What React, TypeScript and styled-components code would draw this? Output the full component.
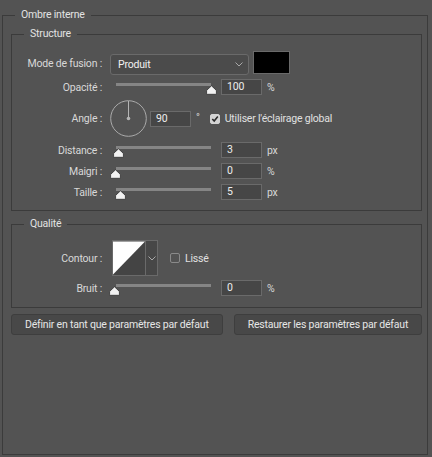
import React from "react";
import styled, { createGlobalStyle } from "styled-components";

const Global = createGlobalStyle`
  html, body { margin: 0; padding: 0; background: #535353; }
  body { font-family: Roboto, "Noto Sans", sans-serif; font-size: 10.5px; letter-spacing: -0.2px; color: #dcdcdc; }
  #root { width: 432px; height: 457px; overflow: hidden; }
  * { box-sizing: border-box; }
`;

const Page = styled.div`
  width: 432px;
  height: 457px;
  padding: 8px 0 0 2px;
  background: #535353;
`;

const Group = styled.fieldset<{ $pl: number; $pr: number; $pt: number; $pb: number; $mt: number; $w: number }>`
  margin: ${(p) => p.$mt}px 0 0 0;
  width: ${(p) => p.$w}px;
  padding: ${(p) => p.$pt}px ${(p) => p.$pr}px ${(p) => p.$pb}px ${(p) => p.$pl}px;
  border: 1px solid #3b3b3b;
  min-width: 0;
`;

const OuterGroup = styled(Group)`
  height: 447px;
`;

const Legend = styled.legend<{ $ml: number }>`
  margin-left: ${(p) => p.$ml}px;
  padding: 0 6px;
  line-height: 14px;
  height: 14px;
  color: #e2e2e2;
`;

const Row = styled.div<{ $mt?: number; $h: number }>`
  display: grid;
  grid-template-columns: 79px 1fr;
  column-gap: 7px;
  margin-top: ${(p) => p.$mt ?? 0}px;
  height: ${(p) => p.$h}px;
  align-items: center;
`;

const Label = styled.div`
  text-align: right;
  line-height: 14px;
  padding-top: 1px;
  padding-right: 1px;
  white-space: nowrap;
  color: #d8d8d8;
`;

const Controls = styled.div<{ $align?: string }>`
  display: flex;
  align-items: ${(p) => p.$align ?? "center"};
  height: 100%;
`;

const Select = styled.div`
  width: 139px;
  height: 21px;
  margin-top: 3px;
  border: 1px solid #6a6a6a;
  border-radius: 3px;
  background: #4b4b4b;
  display: flex;
  align-items: center;
  justify-content: space-between;
  padding: 0 5px 0 7px;
  color: #f0f0f0;
`;

const Swatch = styled.div`
  width: 37px;
  height: 23px;
  margin-left: 4px;
  background: #000;
  border: 1px solid #6a6a6a;
`;

const SliderBox = styled.div`
  position: relative;
  width: 105px;
  height: 16px;
  align-self: flex-start;
`;

const Track = styled.div`
  margin: 4px 4px 0 6px;
  height: 3px;
  background: #858585;
`;

const Thumb = styled.svg`
  position: absolute;
  top: 6px;
  width: 11px;
  height: 10px;
`;

const NumInput = styled.div<{ $ml?: number }>`
  width: 41px;
  height: 16px;
  margin-left: ${(p) => p.$ml ?? 6}px;
  border: 1px solid #6a6a6a;
  background: #464646;
  color: #eeeeee;
  padding-left: 5px;
  line-height: 14px;
`;

const Unit = styled.span`
  margin-left: 5px;
  color: #d8d8d8;
`;

const Degree = styled.span`
  margin-left: 5px;
  margin-top: -2px;
  color: #d8d8d8;
`;

const Check = styled.div<{ $on?: boolean; $ml: number }>`
  width: 10px;
  height: 10px;
  margin-left: ${(p) => p.$ml}px;
  border-radius: 2px;
  background: ${(p) => (p.$on ? "#d4d4d4" : "transparent")};
  border: 1px solid ${(p) => (p.$on ? "#d4d4d4" : "#8a8a8a")};
  display: flex;
  align-items: center;
  justify-content: center;
`;

const CheckText = styled.span`
  margin-left: 5px;
  color: #e0e0e0;
`;

const ContourBox = styled.div`
  margin-left: 2px;
  width: 46px;
  height: 36px;
  border: 1px solid #6a6a6a;
  display: flex;
  background: #444;
`;

const ContourPreview = styled.svg`
  width: 33px;
  height: 34px;
  display: block;
  border-right: 1px solid #6a6a6a;
`;

const ContourArrow = styled.div`
  flex: 1;
  display: flex;
  align-items: center;
  justify-content: center;
  background: #474747;
`;

const Buttons = styled.div`
  display: flex;
  gap: 11px;
  margin-top: 6px;
`;

const Button = styled.div`
  height: 21px;
  padding: 0 13px;
  border: 1px solid #3e3e3e;
  border-radius: 3px;
  background: #484848;
  color: #e6e6e6;
  display: flex;
  align-items: center;
  white-space: nowrap;
`;

const Chevron = () => (
  <svg width="8" height="5" viewBox="0 0 8 5">
    <polyline points="0.5,0.5 4,4 7.5,0.5" fill="none" stroke="#a8a8a8" strokeWidth="1" />
  </svg>
);

const Slider = ({ frac }: { frac: number }) => (
  <SliderBox>
    <Track />
    <Thumb viewBox="0 0 11 10" style={{ left: `${Math.round(6 + frac * 95 - 5.5)}px` }}>
      <path
        d="M5.5 0.8 L10.2 5.2 Q10.4 5.5 10.4 6 V8.6 Q10.4 9.3 9.7 9.3 H1.3 Q0.6 9.3 0.6 8.6 V6 Q0.6 5.5 0.8 5.2 Z"
        fill="#f2f2f2"
        stroke="#2e2e2e"
        strokeWidth="0.8"
      />
    </Thumb>
  </SliderBox>
);

const Dial = () => (
  <svg width="37" height="37" viewBox="0 0 37 37">
    <circle cx="18.5" cy="18.5" r="17.8" fill="none" stroke="#aaaaaa" strokeWidth="1" />
    <line x1="18.5" y1="1" x2="18.5" y2="18.5" stroke="#b4b4b4" strokeWidth="1" />
    <circle cx="18.5" cy="18.5" r="1.8" fill="#b4b4b4" />
  </svg>
);

const CheckMark = () => (
  <svg width="8" height="8" viewBox="0 0 8 8">
    <polyline points="1.3,4 3.2,6 6.8,1.6" fill="none" stroke="#2a2a2a" strokeWidth="1.6" />
  </svg>
);

export default function App() {
  return (
    <>
      <Global />
      <Page>
        <OuterGroup $w={426} $pl={8} $pr={5} $pt={0} $pb={0} $mt={0}>
          <Legend $ml={4}>Ombre interne</Legend>

          <Group $w={411} $pl={12} $pr={12} $pt={10} $pb={10} $mt={5}>
            <Legend $ml={0}>Structure</Legend>

            <Row $h={24}>
              <Label>Mode de fusion :</Label>
              <Controls $align="flex-start">
                <Select>
                  <span>Produit</span>
                  <Chevron />
                </Select>
                <Swatch />
              </Controls>
            </Row>

            <Row $mt={4} $h={16}>
              <Label>Opacité :</Label>
              <Controls>
                <Slider frac={1} />
                <NumInput>100</NumInput>
                <Unit>%</Unit>
              </Controls>
            </Row>

            <Row $mt={5} $h={37}>
              <Label>Angle :</Label>
              <Controls>
                <Dial />
                <NumInput $ml={3}>90</NumInput>
                <Degree>°</Degree>
                <Check $on $ml={10}>
                  <CheckMark />
                </Check>
                <CheckText>Utiliser l'éclairage global</CheckText>
              </Controls>
            </Row>

            <Row $mt={5} $h={16}>
              <Label>Distance :</Label>
              <Controls>
                <Slider frac={2 / 95} />
                <NumInput>3</NumInput>
                <Unit>px</Unit>
              </Controls>
            </Row>

            <Row $mt={5} $h={16}>
              <Label>Maigri :</Label>
              <Controls>
                <Slider frac={-1 / 95} />
                <NumInput>0</NumInput>
                <Unit>%</Unit>
              </Controls>
            </Row>

            <Row $mt={5} $h={16}>
              <Label>Taille :</Label>
              <Controls>
                <Slider frac={4 / 95} />
                <NumInput>5</NumInput>
                <Unit>px</Unit>
              </Controls>
            </Row>
          </Group>

          <Group $w={411} $pl={12} $pr={12} $pt={9} $pb={11} $mt={6}>
            <Legend $ml={0}>Qualité</Legend>

            <Row $h={36}>
              <Label>Contour :</Label>
              <Controls>
                <ContourBox>
                  <ContourPreview viewBox="0 0 33 34">
                    <rect x="0" y="0" width="33" height="34" fill="#444444" />
                    <polygon points="0,0 33,0 0,34" fill="#ffffff" />
                  </ContourPreview>
                  <ContourArrow>
                    <Chevron />
                  </ContourArrow>
                </ContourBox>
                <Check $ml={12} />
                <CheckText>Lissé</CheckText>
              </Controls>
            </Row>

            <Row $mt={4} $h={16}>
              <Label>Bruit :</Label>
              <Controls>
                <Slider frac={-2 / 95} />
                <NumInput>0</NumInput>
                <Unit>%</Unit>
              </Controls>
            </Row>
          </Group>

          <Buttons>
            <Button>Définir en tant que paramètres par défaut</Button>
            <Button>Restaurer les paramètres par défaut</Button>
          </Buttons>
        </OuterGroup>
      </Page>
    </>
  );
}
